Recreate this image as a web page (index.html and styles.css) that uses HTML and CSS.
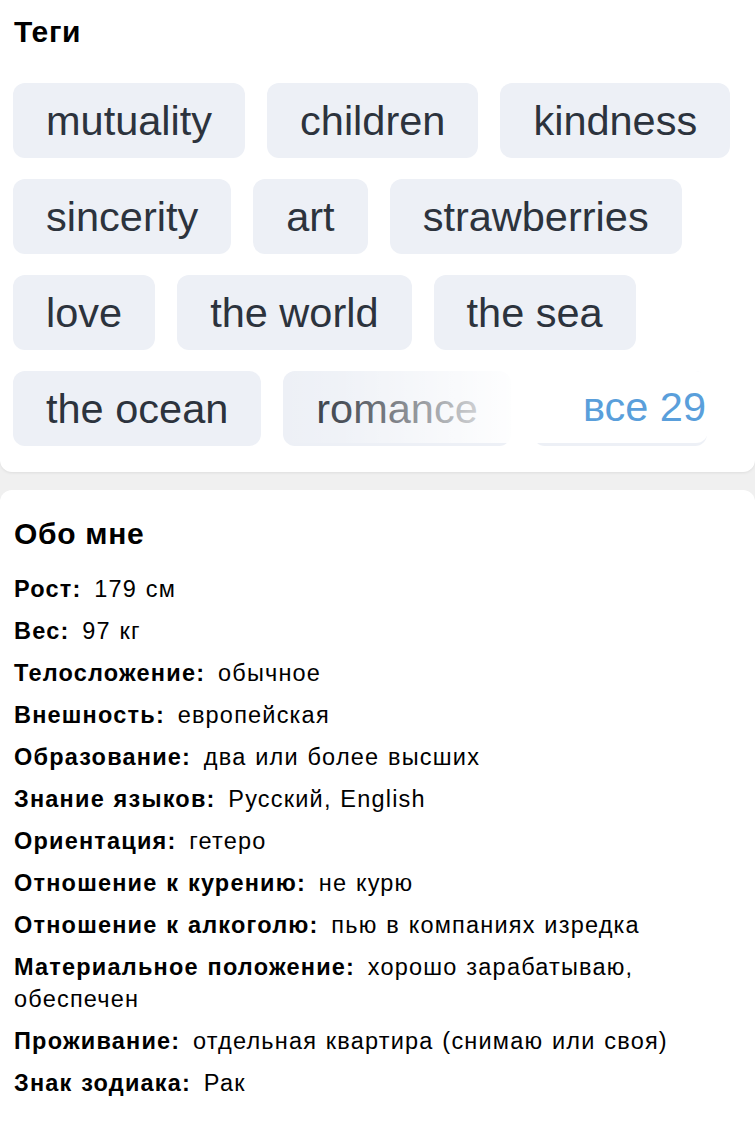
FILE: index.html
```html
<!DOCTYPE html>
<html lang="ru">

<head>
    <meta charset="UTF-8">
    <meta name="viewport" content="width=device-width, initial-scale=1.0">
    <title>Профиль</title>
    <link rel="stylesheet" href="styles.css">
</head>

<body>
    <div class="card tags-card">
        <h2 class="card-title">Теги</h2>
        <div class="tags">
            <span class="tag">mutuality</span>
            <span class="tag">children</span>
            <span class="tag">kindness</span>
            <span class="tag">sincerity</span>
            <span class="tag">art</span>
            <span class="tag">strawberries</span>
            <span class="tag">love</span>
            <span class="tag">the world</span>
            <span class="tag">the sea</span>
            <span class="tag">the ocean</span>
            <span class="tag">romance</span>
            <span class="tag tag-hidden"></span>
            <a class="tags-more" href="#">все 29</a>
        </div>
    </div>

    <div class="card about-card">
        <h2 class="card-title">Обо мне</h2>
        <ul class="about-list">
            <li><b>Рост:</b> 179 см</li>
            <li><b>Вес:</b> 97 кг</li>
            <li><b>Телосложение:</b> обычное</li>
            <li><b>Внешность:</b> европейская</li>
            <li><b>Образование:</b> два или более высших</li>
            <li><b>Знание языков:</b> Русский, English</li>
            <li><b>Ориентация:</b> гетеро</li>
            <li><b>Отношение к курению:</b> не курю</li>
            <li><b>Отношение к алкоголю:</b> пью в компаниях изредка</li>
            <li><b>Материальное положение:</b> хорошо зарабатываю, обеспечен</li>
            <li><b>Проживание:</b> отдельная квартира (снимаю или своя)</li>
            <li><b>Знак зодиака:</b> Рак</li>
        </ul>
    </div>
</body>

</html>
```

FILE: styles.css
```css
* {
    margin: 0;
    padding: 0;
    box-sizing: border-box;
    font-family: "Liberation Sans", Arial, Helvetica, sans-serif;
}

body {
    background-color: #f0f0f0;
    color: #000;
}

.card {
    background-color: #fff;
    padding: 14px 14px 26px 13px;
}

.tags-card {
    border-radius: 0 0 12px 12px;
    box-shadow: 0 1px 3px rgba(0, 0, 0, 0.08);
}

.about-card {
    margin-top: 18px;
    border-radius: 12px 12px 0 0;
    padding-top: 26px;
    min-height: 631px;
}

.card-title {
    font-size: 30px;
    line-height: 36px;
    font-weight: bold;
    letter-spacing: 0.7px;
    padding-left: 1px;
}

/* tags */
.tags {
    position: relative;
    display: flex;
    flex-wrap: wrap;
    gap: 21px 22px;
    height: 363px;
    overflow: hidden;
    margin-top: 33px;
}

.tag {
    display: flex;
    align-items: center;
    height: 75px;
    padding: 0 33px;
    background-color: #edf0f6;
    color: #2c333d;
    font-size: 41.5px;
    border-radius: 12px;
    white-space: nowrap;
}

/* next tag, covered by the "все" link */
.tag-hidden {
    width: 174px;
}

.tags-more {
    position: absolute;
    right: 33px;
    bottom: 3px;
    width: 430px;
    height: 72px;
    line-height: 72px;
    text-align: right;
    padding-right: 2px;
    font-size: 41.5px;
    color: #5a9fdb;
    text-decoration: none;
    background: linear-gradient(to right, rgba(255, 255, 255, 0) 0, rgba(255, 255, 255, 0.15) 15%, #fff 58%);
    border-radius: 0 12px 12px 0;
}

/* about */
.about-list {
    list-style: none;
    margin-top: 21px;
    padding-left: 1px;
}

.about-list li {
    font-size: 23.5px;
    line-height: 32px;
    letter-spacing: 1.2px;
    word-spacing: 1px;
    margin-bottom: 10px;
}

.about-list b {
    margin-right: 4px;
}
```
